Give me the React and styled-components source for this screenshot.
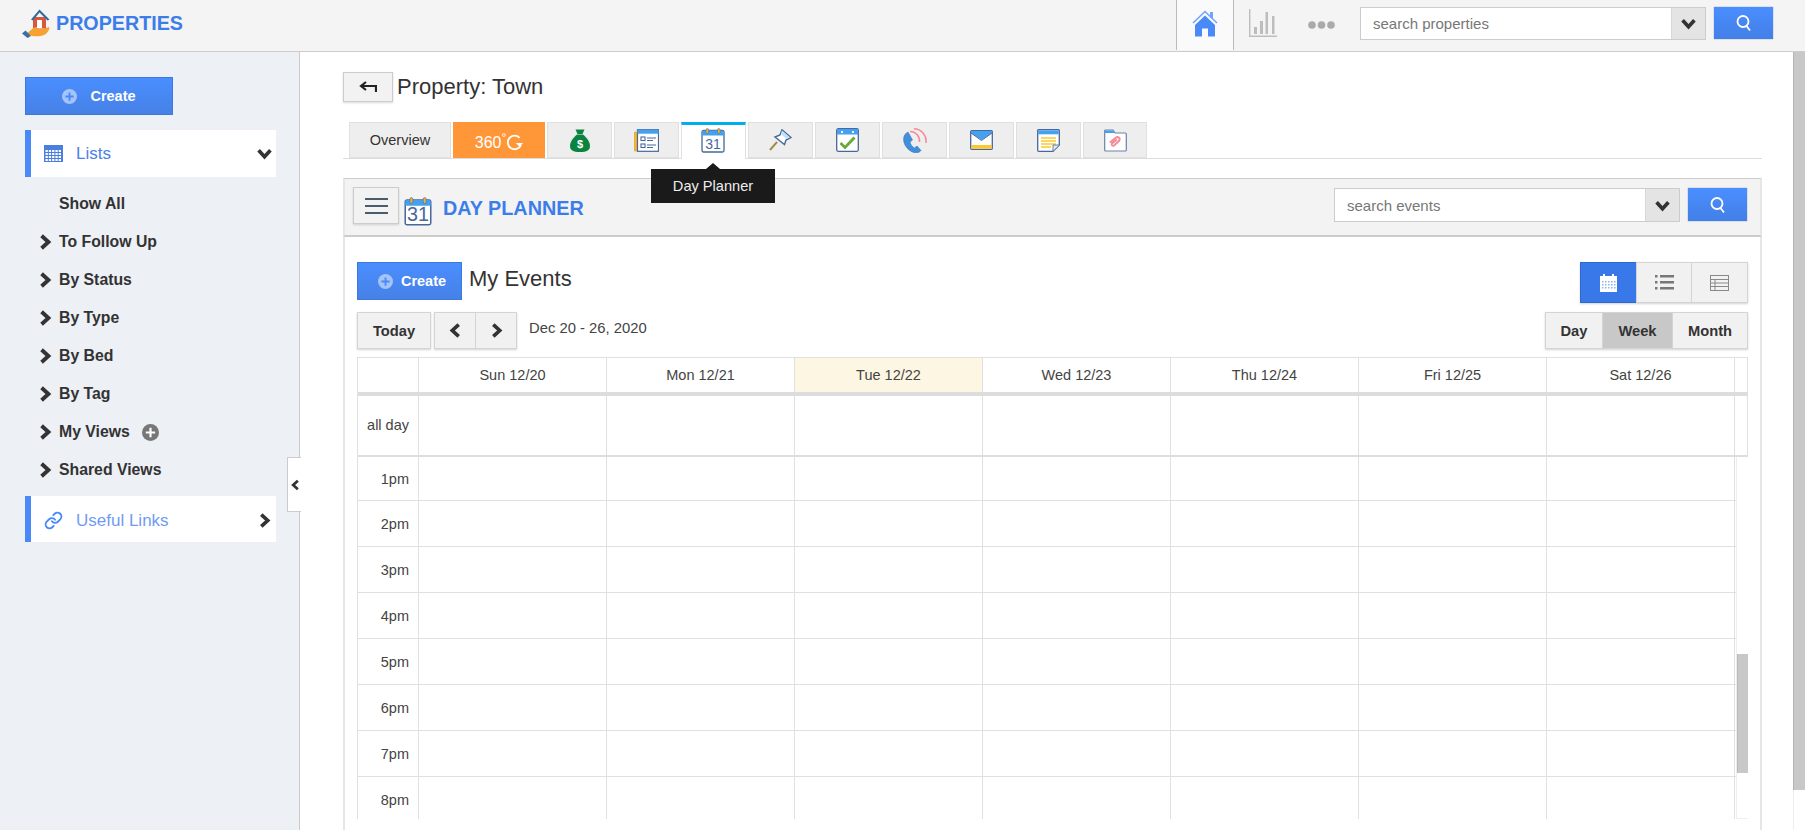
import React from 'react';
import styled, { createGlobalStyle } from 'styled-components';
import { Link as LinkIcon } from 'lucide-react';

const BLUE = '#4a8af8';
const TITLE_BLUE = '#3b7dea';
const LINE = '#e0e0e0';

const GlobalStyle = createGlobalStyle`
  html, body { margin: 0; padding: 0; height: 100%; overflow: hidden; }
  body { font-family: "Liberation Sans", Arial, sans-serif; color: #333; background: #fff; }
  * { box-sizing: border-box; }
`;

const Page = styled.div`
  width: 1805px;
  height: 830px;
  display: flex;
  flex-direction: column;
  overflow: hidden;
`;

const TopBar = styled.header`
  height: 52px;
  flex: none;
  display: flex;
  align-items: flex-start;
  background: #f4f4f4;
  border-bottom: 1px solid #ccc;
  padding: 0 32px 0 22px;
`;

const Brand = styled.div`
  display: flex;
  align-items: center;
  height: 46px;
  gap: 6px;
  font-size: 19.7px;
  font-weight: 700;
  color: ${TITLE_BLUE};
`;

const TopRight = styled.div`
  margin-left: auto;
  display: flex;
  align-items: flex-start;
`;

const HomeTab = styled.div`
  width: 58px;
  height: 50px;
  background: #fafafa;
  border-left: 1px solid #bbb;
  border-right: 1px solid #bbb;
  display: flex;
  justify-content: center;
  padding-top: 10px;
`;

const TopIcon = styled.div`
  margin-left: ${p => p.$left}px;
  padding-top: ${p => p.$top}px;
  display: flex;
`;

const SearchBox = styled.div`
  display: flex;
  height: ${p => p.$h}px;
  width: 346px;
  margin-left: ${p => p.$left || 0}px;
  margin-top: ${p => p.$top || 0}px;
  border: 1px solid #ccc;
  background: #fff;
`;

const SearchText = styled.div`
  flex: 1;
  font-size: 15px;
  color: #777;
  padding-left: 12px;
  display: flex;
  align-items: center;
`;

const SearchDrop = styled.div`
  width: 34px;
  background: #e4e4e4;
  border-left: 1px solid #d8d8d8;
  display: flex;
  align-items: center;
  justify-content: center;
`;

const SearchButton = styled.div`
  width: 59px;
  height: ${p => p.$h}px;
  margin-left: 8px;
  margin-top: ${p => p.$top || 0}px;
  background: linear-gradient(#4a8eff, #437fe6);
  box-shadow: 0 0 1px rgba(30, 80, 180, .7);
  display: flex;
  align-items: center;
  justify-content: center;
`;

const Workspace = styled.div`
  flex: 1;
  min-height: 0;
  display: flex;
  position: relative;
`;

const Sidebar = styled.aside`
  width: 300px;
  flex: none;
  background: #edf0f5;
  border-right: 1px solid #ccc;
  padding: 25px 23px 0 25px;
`;

const CreateButton = styled.div`
  width: ${p => p.$w}px;
  height: 38px;
  background: linear-gradient(#4a8eff, #4681e6);
  border: 1px solid #3d78df;
  color: #fff;
  font-size: 14.5px;
  font-weight: 700;
  display: flex;
  align-items: center;
  justify-content: center;
  gap: ${p => p.$gap}px;
  padding-left: ${p => p.$pad}px;
  flex: none;
`;

const SideCard = styled.div`
  height: ${p => p.$h}px;
  margin-top: ${p => p.$top}px;
  background: #fff;
  border-left: 6px solid ${BLUE};
  display: flex;
  align-items: center;
  padding: ${p => p.$nudge || 0}px 4px 0 13px;
  font-size: 17px;
  color: ${p => p.$color};
`;

const SideCardLabel = styled.span`
  margin-left: 13px;
  flex: 1;
`;

const SideList = styled.div`
  margin: 8px 0 7px;
`;

const SideItem = styled.div`
  height: 38px;
  display: flex;
  align-items: center;
  gap: 6px;
  padding-left: ${p => (p.$plain ? 34 : 12)}px;
  font-size: 15.8px;
  font-weight: 700;
  color: #333;
`;

const AddBadge = styled.span`
  display: flex;
  margin-left: 6px;
`;

const CollapseTab = styled.div`
  position: absolute;
  left: 287px;
  top: 405px;
  width: 14px;
  height: 55px;
  background: #fff;
  border: 1px solid #ccc;
  border-right: 0;
  display: flex;
  align-items: center;
  padding-left: 2px;
`;

const Main = styled.main`
  flex: 1;
  min-width: 0;
  overflow: hidden;
  padding: 20px 31px 0 43px;
`;

const TitleRow = styled.div`
  display: flex;
  align-items: center;
  gap: 4px;
  height: 30px;
  font-size: 22px;
  color: #333;
`;

const BackButton = styled.div`
  width: 50px;
  height: 30px;
  background: #f2f2f2;
  border: 1px solid #ccc;
  box-shadow: 0 1px 2px rgba(0, 0, 0, .15);
  display: flex;
  align-items: center;
  justify-content: center;
`;

const TabStrip = styled.nav`
  margin-top: 20px;
  padding-left: 6px;
  height: 37px;
  display: flex;
  gap: 2px;
  border-bottom: 1px solid #ddd;
`;

const Tab = styled.div`
  width: ${p => p.$w || 65}px;
  height: ${p => (p.$active ? 37 : 36)}px;
  display: flex;
  align-items: center;
  justify-content: center;
  font-size: 14.5px;
  color: #333;
  background: ${p => (p.$active ? '#fff' : p.$orange ? '#ff9638' : '#eee')};
  border: 1px solid ${p => (p.$orange ? '#ff9638' : LINE)};
  border-bottom: ${p => (p.$active ? '0' : undefined)};
  border-top: ${p => (p.$active ? '3px solid #00aeef' : undefined)};
  padding: ${p => (p.$active ? '0 2px 3px 0' : '0')};
`;

const ThreeSixty = styled.span`
  color: #fff;
  font-size: 16px;
  display: flex;
  align-items: center;
  gap: 0;
  padding: 5px 0 0 0;
`;

const Degree = styled.sup`
  font-size: 12px;
  line-height: 0;
  align-self: flex-start;
  margin-top: 4px;
`;

const Tooltip = styled.div`
  position: absolute;
  left: 651px;
  top: 117px;
  width: 124px;
  height: 34px;
  background: #1a1a1a;
  color: #eee;
  font-size: 14.6px;
  display: flex;
  align-items: center;
  justify-content: center;
  z-index: 2;
  &::before {
    content: '';
    position: absolute;
    left: 55px;
    top: -6px;
    border-left: 7px solid transparent;
    border-right: 7px solid transparent;
    border-bottom: 6px solid #1a1a1a;
  }
`;

const Panel = styled.section`
  margin-top: 19px;
  height: 700px;
  border: 2px solid #e6e6e6;
  border-top: 0;
`;

const PanelHeader = styled.div`
  height: 59px;
  margin: 0 -2px;
  padding: 0 13px 0 8px;
  background: #f3f3f3;
  border-style: solid;
  border-width: 1px 2px 2px 2px;
  border-color: #ccc #e6e6e6 #ccc #e6e6e6;
  display: flex;
  align-items: flex-start;
`;

const MenuButton = styled.div`
  width: 46px;
  height: 37px;
  margin-top: 8px;
  background: #f2f2f2;
  border: 1px solid #ccc;
  box-shadow: 0 1px 2px rgba(0, 0, 0, .15);
  display: flex;
  flex-direction: column;
  justify-content: center;
  align-items: center;
  gap: 5px;
`;

const MenuLine = styled.span`
  width: 23px;
  height: 2px;
  background: #4a5b6b;
`;

const PanelTitle = styled.h2`
  margin: 17px 0 0 11px;
  font-size: 19.8px;
  line-height: 24px;
  font-weight: 700;
  color: ${TITLE_BLUE};
`;

const PanelIcon = styled.span`
  display: flex;
  margin: 18px 0 0 5px;
`;

const PanelSearch = styled.div`
  margin-left: auto;
  display: flex;
  align-items: flex-start;
`;

const PanelBody = styled.div`
  padding: 25px 12px 0 12px;
`;

const ToolRow = styled.div`
  display: flex;
  align-items: flex-start;
  justify-content: space-between;
  margin-top: ${p => p.$top || 0}px;
`;

const ToolGroup = styled.div`
  display: flex;
  align-items: flex-start;
`;

const EventsTitle = styled.h3`
  margin: 0 0 0 7px;
  font-size: 22px;
  line-height: 34px;
  font-weight: 400;
  color: #333;
`;

const ButtonGroup = styled.div`
  display: flex;
  margin-left: ${p => p.$left || 0}px;
  box-shadow: 0 1px 2px rgba(0, 0, 0, .18);
`;

const GroupButton = styled.div`
  width: ${p => p.$w}px;
  height: ${p => p.$h || 37}px;
  background: ${p => (p.$blue ? '#3878e8' : p.$on ? '#c8c8c8' : '#f1f1f1')};
  border: 1px solid ${p => (p.$blue ? '#2f68cf' : '#d4d4d4')};
  margin-left: ${p => (p.$first ? 0 : -1)}px;
  display: flex;
  align-items: center;
  justify-content: center;
  font-size: 14.7px;
  font-weight: 700;
  color: #333;
`;

const DateRange = styled.span`
  margin-left: 12px;
  font-size: 14.8px;
  line-height: 33px;
  color: #444;
`;

const Grid = styled.div`
  margin-top: 8px;
  border-top: 1px solid ${LINE};
  border-left: 1px solid ${LINE};
  width: 1391px;
`;

const HeadRow = styled.div`
  display: grid;
  grid-template-columns: 61px repeat(7, 188px) 13px;
  height: ${p => p.$h}px;
  border-bottom: ${p => p.$rule}px solid #ddd;
`;

const HeadCell = styled.div`
  border-right: 1px solid ${LINE};
  background: ${p => (p.$today ? '#fdf6e3' : '#fff')};
  display: flex;
  align-items: center;
  justify-content: ${p => (p.$time ? 'flex-end' : 'center')};
  padding-right: ${p => (p.$time ? 9 : 0)}px;
  padding-bottom: ${p => (p.$allDay ? 2 : 0)}px;
  font-size: 14.5px;
  color: #444;
`;

const ScrollArea = styled.div`
  display: flex;
  height: 362px;
  overflow: hidden;
`;

const Hours = styled.div`
  width: 1378px;
  flex: none;
`;

const HourRow = styled.div`
  display: grid;
  grid-template-columns: 61px repeat(7, 188px);
  height: 46px;
  border-bottom: 1px solid ${LINE};
  &:first-child { height: 44px; }
`;

const InnerTrack = styled.div`
  width: 13px;
  flex: none;
  background: #fff;
  border: 1px solid #eee;
  border-top: 0;
`;

const InnerThumb = styled.div`
  width: 12px;
  height: 119px;
  margin-top: 197px;
  background: #c8c8c8;
  border-left: 1px solid #b8b8b8;
`;

const PageScroll = styled.div`
  width: 12px;
  flex: none;
  background: #fff;
  border-left: 1px solid #eee;
`;

const PageThumb = styled.div`
  height: 738px;
  margin-left: -1px;
  background: #c8c8c8;
  border-left: 1px solid #b4b4b4;
`;

const Chev = ({ dir = 'right', size = 14, color = '#333', width = 3.4 }) => {
  const pts = {
    right: '4,1.5 10,7 4,12.5',
    left: '10,1.5 4,7 10,12.5',
    down: '1.5,4 7,10 12.5,4',
  }[dir];
  return (
    <svg width={size} height={size} viewBox="0 0 14 14">
      <polyline points={pts} fill="none" stroke={color} strokeWidth={width} />
    </svg>
  );
};

const SearchGlyph = () => (
  <svg width="18" height="18" viewBox="0 0 18 18" fill="none" stroke="#fff" strokeWidth="1.8">
    <circle cx="8" cy="7.5" r="5.5" />
    <line x1="11.5" y1="12" x2="15" y2="16.5" />
  </svg>
);

const PlusCircle = ({ size = 15, fill = 'rgba(255,255,255,.5)', plus = '#4a8af8' }) => (
  <svg width={size} height={size} viewBox="0 0 16 16">
    <circle cx="8" cy="8" r="8" fill={fill} />
    <path d="M8 3.6v8.8M3.6 8h8.8" stroke={plus} strokeWidth="2" />
  </svg>
);

const Logo = () => (
  <svg width="28" height="29" viewBox="0 0 28 29">
    <path d="M4 25 L9 21 C12 18 15 18 18 19.500 L21 20 L27 18 C28 20 26 24 22 26 C18 28 13 27 10 27 Z" fill="#f7a230" />
    <path d="M0 24.500 L3.500 21.500 L9 27 L5.500 29 Z" fill="#3b6fa8" />
    <path d="M11 8 H24 V19.500 H19 C17 18.500 14 18 11 19 Z" fill="#d9583b" />
    <rect x="15" y="11" width="5" height="8" fill="#fff" />
    <path d="M9 10.500 L17.500 .5 L27.500 10.500 L25.500 11.500 L17.500 3.500 L11 11.500 Z" fill="#2f6a9c" />
  </svg>
);

const HomeIcon = () => (
  <svg width="26" height="27" viewBox="0 0 26 27">
    <path d="M1 13 L13 1.500 L25 13" fill="none" stroke="#6fa5ff" strokeWidth="1.600" />
    <rect x="18" y="2" width="3" height="6" fill="#6fa5ff" />
    <path d="M13 5.500 L23 15 V26.500 H16 V18.500 H10 V26.500 H3 V15 Z" fill="#4a8af8" />
  </svg>
);

const ChartIcon = () => (
  <svg width="28" height="28" viewBox="0 0 28 28" fill="#bdbdbd">
    <path d="M0 0h1.400v26.500H28V28H0z" />
    <rect x="5" y="18" width="3" height="7" />
    <rect x="11" y="12" width="3" height="13" />
    <rect x="16.500" y="3" width="2.500" height="22" />
    <rect x="23" y="7" width="2.500" height="18" />
  </svg>
);

const DotsIcon = () => (
  <svg width="27" height="8" viewBox="0 0 27 8" fill="#aaa">
    <circle cx="4" cy="4" r="3.800" />
    <circle cx="13.500" cy="4" r="3.800" />
    <circle cx="23" cy="4" r="3.800" />
  </svg>
);

const BackArrow = () => (
  <svg width="18" height="12" viewBox="0 0 18 12" fill="none" stroke="#222" strokeWidth="2.200">
    <path d="M17 11V5H3" />
    <path d="M7 1 L2 5 L7 9" />
  </svg>
);

const ListsIcon = () => (
  <svg width="19" height="17" viewBox="0 0 19 17">
    <rect width="19" height="17" fill="#4a7fe0" />
    <g fill="#fff">
      {[5, 8, 11, 14].map(y =>
        [1.5, 4.8, 8.1, 11.4, 14.7].map(x => <rect key={`${x}-${y}`} x={x} y={y} width="2.300" height="2" />)
      )}
    </g>
  </svg>
);

const CalendarIcon = ({ w = 24, h = 25, size = 11 }) => (
  <svg width={w} height={h} viewBox="0 0 24 25">
    <rect x="1" y="2.500" width="22" height="21.500" rx="1.500" fill="#fff" stroke="#47689a" strokeWidth="1.300" />
    <path d="M1 7.500V4a1.500 1.500 0 0 1 1.500-1.500h19A1.500 1.500 0 0 1 23 4v3.500z" fill="#45a0f0" />
    <rect x="5" y="0.500" width="2.600" height="5" rx="1.300" fill="#e6b23a" stroke="#47689a" strokeWidth=".5" />
    <rect x="16.500" y="0.500" width="2.600" height="5" rx="1.300" fill="#e6b23a" stroke="#47689a" strokeWidth=".5" />
    <text x="12" y="21" textAnchor="middle" fontSize={size + 3} fontFamily="Liberation Sans, sans-serif" fill="#47689a">31</text>
  </svg>
);

const RefreshGlyph = () => (
  <svg width="17" height="17" viewBox="0 0 20 20" fill="none" stroke="#fff" strokeWidth="2.200">
    <path d="M16 4.500 A8 8 0 1 0 17.500 13" />
    <path d="M11.500 10.500 H20 L16 15 Z" fill="#fff" stroke="none" />
  </svg>
);

const MoneyIcon = () => (
  <svg width="20" height="23" viewBox="0 0 20 23">
    <path d="M5.500 .5 H14.500 L12.500 5 H7.500 Z" fill="#0b8340" />
    <path d="M7 5.500 H13 C17 9 20 13 20 17 C20 21 17 23 10 23 C3 23 0 21 0 17 C0 13 3 9 7 5.500 Z" fill="#0b8340" />
    <text x="10" y="19" textAnchor="middle" fontSize="11" fontWeight="700" fontFamily="Liberation Sans, sans-serif" fill="#fff">$</text>
  </svg>
);

const FormIcon = () => (
  <svg width="25" height="23" viewBox="0 0 25 23">
    <rect x="0" y="3" width="5" height="19" rx="1" fill="#f2b632" stroke="#c99a2c" strokeWidth=".5" />
    <rect x="3.500" y=".7" width="21" height="21.600" fill="#fff" stroke="#47689a" strokeWidth="1.200" />
    <rect x="3.500" y=".7" width="21" height="4" fill="#45a0f0" />
    <g fill="none" stroke="#47689a" strokeWidth="1.100">
      <rect x="7" y="8" width="4" height="3.500" />
      <rect x="7" y="15" width="4" height="3.500" />
      <path d="M13 9h9M13 11.500h6M13 16h9M13 18.500h6" />
    </g>
  </svg>
);

const PinIcon = () => (
  <svg width="23" height="22" viewBox="0 0 23 22">
    <path d="M1 21 L8 13" stroke="#c9a23a" strokeWidth="2.200" />
    <path d="M1 21 L8 13" stroke="#47689a" strokeWidth=".7" />
    <path d="M13 .8 L22 8.500 L17 11 L15.500 15.500 L6 8 L11 6 Z" fill="#fff" stroke="#47689a" strokeWidth="1.400" />
    <path d="M13 1.500 L21 8.500 L17.500 10 L12 5 Z" fill="#bfe0fb" />
  </svg>
);

const CheckIcon = () => (
  <svg width="23" height="24" viewBox="0 0 23 24">
    <rect x=".7" y=".7" width="21.600" height="22.600" rx="1.500" fill="#fff" stroke="#47689a" strokeWidth="1.300" />
    <rect x="1" y="1" width="21" height="5.500" fill="#45a0f0" />
    <rect x="5" y="3" width="2" height="2" fill="#fff" />
    <rect x="16" y="3" width="2" height="2" fill="#fff" />
    <path d="M4.500 15 L9 19.500 L18.500 9.500" fill="none" stroke="#6aa83a" strokeWidth="2.800" />
  </svg>
);

const PhoneIcon = () => (
  <svg width="24" height="25" viewBox="0 0 24 25">
    <path d="M5 4 L9.500 12 L7 14 C7.500 16.500 9 18.500 11.500 20 L14 18 L18 22.500 C16 25 13 25.500 9.500 24 C3.500 21.500 0 15 .7 10 C1 7 3 5 5 4 Z" fill="#3f8fdc" stroke="#3575b8" strokeWidth=".6" />
    <g fill="none" stroke="#f58a96" strokeWidth="1.500">
      <path d="M7 3.500 C12 3 17 8 16.500 14" />
      <path d="M11 .8 C18 1 24 7 23 15" />
    </g>
  </svg>
);

const MailIcon = () => (
  <svg width="23" height="20" viewBox="0 0 23 20">
    <rect x=".7" y=".7" width="21.600" height="18.600" rx="1" fill="#fff" stroke="#47689a" strokeWidth="1.300" />
    <path d="M1 1 H22 V3 L11.500 10 L1 3 Z" fill="#45a0f0" />
    <rect x="1.300" y="15" width="20.400" height="3.700" fill="#fbc92c" />
    <path d="M1 3 L11.500 10.500 L22 3" fill="none" stroke="#47689a" />
  </svg>
);

const NoteIcon = () => (
  <svg width="23" height="23" viewBox="0 0 23 23">
    <path d="M.7 1.500 A1 1 0 0 1 1.700 .7 H21.300 A1 1 0 0 1 22.300 1.500 V16 L16 22.300 H1.700 A1 1 0 0 1 .7 21.300 Z" fill="#fff" stroke="#47689a" strokeWidth="1.300" />
    <rect x="1.300" y="1.300" width="20.400" height="4" fill="#45a0f0" />
    <path d="M4 9h15M4 12h15M4 15h15M4 18h10" stroke="#fbc92c" strokeWidth="1.300" />
    <path d="M22 16h-6v6" fill="#e8e8e8" stroke="#47689a" strokeWidth=".8" />
  </svg>
);

const AttachIcon = () => (
  <svg width="23" height="23" viewBox="0 0 23 23">
    <path d="M.7 2 A1 1 0 0 1 1.700 1 H9 L11 4 H21.300 A1 1 0 0 1 22.300 5 V21 A1 1 0 0 1 21.300 22 H1.700 A1 1 0 0 1 .7 21 Z" fill="#fff" stroke="#6a82a8" strokeWidth="1.200" />
    <path d="M1 1.500 H9 L10.500 4 H1 Z" fill="#45a0f0" />
    <path d="M6 13.500 L12 8.500 C14 7 17 9.500 15 12 L10 16.500 C8.500 17.500 7 16 8 14.500 L13 10.500" fill="none" stroke="#f58a96" strokeWidth="1.900" />
  </svg>
);

const CalendarView = () => (
  <svg width="17" height="18" viewBox="0 0 17 18">
    <rect y="2" width="17" height="16" fill="#fff" />
    <rect x="3" width="2" height="4" fill="#fff" />
    <rect x="12" width="2" height="4" fill="#fff" />
    <g fill="#8db4f2">
      {[7, 10, 13].map(y =>
        [2, 5, 8, 11, 14].map(x => <rect key={`${x}-${y}`} x={x} y={y} width="1.500" height="1.500" />)
      )}
    </g>
  </svg>
);

const ListView = () => (
  <svg width="19" height="15" viewBox="0 0 19 15" fill="#777">
    <rect y="0" width="2.500" height="2.500" />
    <rect y="6" width="2.500" height="2.500" />
    <rect y="12" width="2.500" height="2.500" />
    <rect x="5" y="0" width="14" height="2.500" />
    <rect x="5" y="6" width="14" height="2.500" />
    <rect x="5" y="12" width="14" height="2.500" />
  </svg>
);

const TableView = () => (
  <svg width="19" height="16" viewBox="0 0 19 16" fill="none" stroke="#888">
    <rect x=".5" y=".5" width="18" height="15" />
    <path d="M0 4.500h19M0 8h19M0 11.500h19M5 4v12" />
  </svg>
);

const days = ['Sun 12/20', 'Mon 12/21', 'Tue 12/22', 'Wed 12/23', 'Thu 12/24', 'Fri 12/25', 'Sat 12/26'];
const hours = ['1pm', '2pm', '3pm', '4pm', '5pm', '6pm', '7pm', '8pm'];
const sideItems = ['To Follow Up', 'By Status', 'By Type', 'By Bed', 'By Tag', 'My Views', 'Shared Views'];
const tabIcons = [
  <MoneyIcon />, <FormIcon />, <CalendarIcon />, <PinIcon />, <CheckIcon />,
  <PhoneIcon />, <MailIcon />, <NoteIcon />, <AttachIcon />,
];

const Search = ({ text, h, left, top, btnH }) => (
  <>
    <SearchBox $h={h} $left={left} $top={top}>
      <SearchText>{text}</SearchText>
      <SearchDrop><Chev dir="down" size={15} /></SearchDrop>
    </SearchBox>
    <SearchButton $h={btnH} $top={top}><SearchGlyph /></SearchButton>
  </>
);

export default function App() {
  return (
    <Page>
      <GlobalStyle />
      <TopBar>
        <Brand><Logo />PROPERTIES</Brand>
        <TopRight>
          <HomeTab><HomeIcon /></HomeTab>
          <TopIcon $left={15} $top={9}><ChartIcon /></TopIcon>
          <TopIcon $left={31} $top={21}><DotsIcon /></TopIcon>
          <Search text="search properties" h={33} left={25} top={7} btnH={32} />
        </TopRight>
      </TopBar>
      <Workspace>
        <Sidebar>
          <CreateButton $w={148} $gap={13} $pad={0}><PlusCircle />Create</CreateButton>
          <SideCard $h={47} $top={15} $color="#4a80e8">
            <ListsIcon />
            <SideCardLabel>Lists</SideCardLabel>
            <Chev dir="down" size={15} />
          </SideCard>
          <SideList>
            <SideItem $plain>Show All</SideItem>
            {sideItems.map(item => (
              <SideItem key={item}>
                <Chev size={16} />
                {item}
                {item === 'My Views' && (
                  <AddBadge><PlusCircle size={17} fill="#777" plus="#fff" /></AddBadge>
                )}
              </SideItem>
            ))}
          </SideList>
          <SideCard $h={46} $top={0} $nudge={3} $color="#6f9bf5">
            <LinkIcon size={19} color={BLUE} strokeWidth={2.4} />
            <SideCardLabel>Useful Links</SideCardLabel>
            <Chev size={15} />
          </SideCard>
        </Sidebar>
        <CollapseTab><Chev dir="left" size={16} /></CollapseTab>
        <Main>
          <TitleRow>
            <BackButton><BackArrow /></BackButton>
            Property: Town
          </TitleRow>
          <TabStrip>
            <Tab $w={102}>Overview</Tab>
            <Tab $w={92} $orange>
              <ThreeSixty>360<Degree>°</Degree><RefreshGlyph /></ThreeSixty>
            </Tab>
            {tabIcons.map((icon, i) => (
              <Tab key={i} $active={i === 2} $w={i === 8 ? 64 : 65}>{icon}</Tab>
            ))}
          </TabStrip>
          <Tooltip>Day Planner</Tooltip>
          <Panel>
            <PanelHeader>
              <MenuButton><MenuLine /><MenuLine /><MenuLine /></MenuButton>
              <PanelIcon><CalendarIcon w={28} h={29} size={14} /></PanelIcon>
              <PanelTitle>DAY PLANNER</PanelTitle>
              <PanelSearch>
                <Search text="search events" h={34} top={9} btnH={33} />
              </PanelSearch>
            </PanelHeader>
            <PanelBody>
              <ToolRow>
                <ToolGroup>
                  <CreateButton $w={105} $gap={8} $pad={5}><PlusCircle />Create</CreateButton>
                  <EventsTitle>My Events</EventsTitle>
                </ToolGroup>
                <ButtonGroup>
                  <GroupButton $first $blue $w={57} $h={41}><CalendarView /></GroupButton>
                  <GroupButton $w={56} $h={41}><ListView /></GroupButton>
                  <GroupButton $w={57} $h={41}><TableView /></GroupButton>
                </ButtonGroup>
              </ToolRow>
              <ToolRow $top={9}>
                <ToolGroup>
                  <ButtonGroup><GroupButton $first $w={74}>Today</GroupButton></ButtonGroup>
                  <ButtonGroup $left={3}>
                    <GroupButton $first $w={42}><Chev dir="left" size={15} /></GroupButton>
                    <GroupButton $w={42}><Chev size={15} /></GroupButton>
                  </ButtonGroup>
                  <DateRange>Dec 20 - 26, 2020</DateRange>
                </ToolGroup>
                <ButtonGroup>
                  <GroupButton $first $w={58}>Day</GroupButton>
                  <GroupButton $on $w={71}>Week</GroupButton>
                  <GroupButton $w={76}>Month</GroupButton>
                </ButtonGroup>
              </ToolRow>
              <Grid>
                <HeadRow $h={38} $rule={4}>
                  <HeadCell />
                  {days.map(d => <HeadCell key={d} $today={d.startsWith('Tue')}>{d}</HeadCell>)}
                  <HeadCell />
                </HeadRow>
                <HeadRow $h={61} $rule={2}>
                  <HeadCell $time $allDay>all day</HeadCell>
                  {days.map(d => <HeadCell key={d} />)}
                  <HeadCell />
                </HeadRow>
                <ScrollArea>
                  <Hours>
                    {hours.map(h => (
                      <HourRow key={h}>
                        <HeadCell $time>{h}</HeadCell>
                        {days.map(d => <HeadCell key={d} />)}
                      </HourRow>
                    ))}
                  </Hours>
                  <InnerTrack><InnerThumb /></InnerTrack>
                </ScrollArea>
              </Grid>
            </PanelBody>
          </Panel>
        </Main>
        <PageScroll><PageThumb /></PageScroll>
      </Workspace>
    </Page>
  );
}
